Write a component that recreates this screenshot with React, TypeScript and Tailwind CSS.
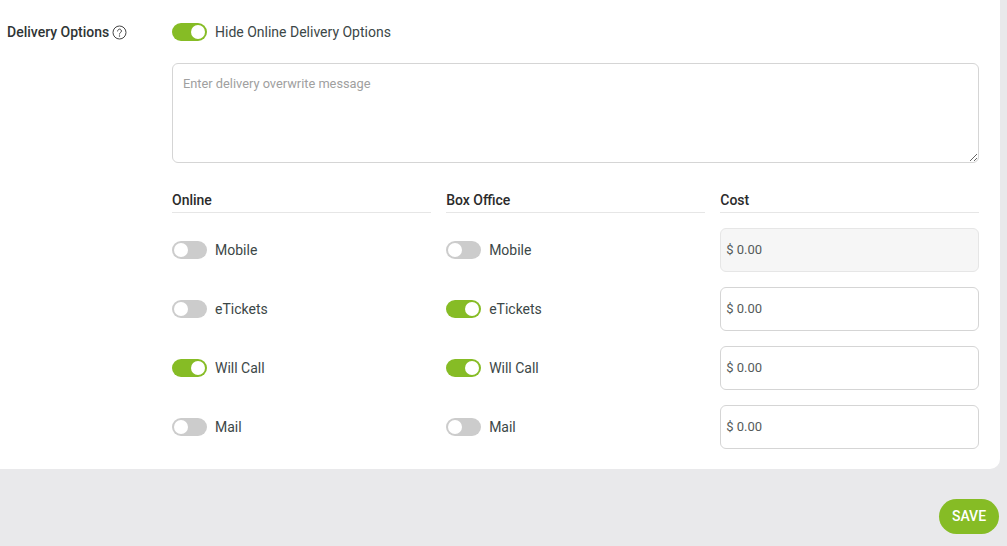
const F = "font-['Roboto',sans-serif]";

function Toggle({ on, label }: { on: boolean; label: string }) {
  return (
    <div className="flex items-center gap-2 h-[18px]">
      <span className={`flex h-[18px] w-[35px] items-center rounded-full px-[2px] ${on ? 'justify-end bg-[#86bc25]' : 'justify-start bg-[#cccccc]'}`}>
        <span className="h-[14px] w-[14px] rounded-full bg-white" />
      </span>
      <span className="text-[14px] leading-[18px] text-[#3c4747]">{label}</span>
    </div>
  );
}

function Head({ children }: { children: string }) {
  return (
    <div className="h-[26px] border-b border-[#e6e6e6] text-[14px] leading-[26px] font-medium text-[#2b2b2b]">
      {children}
    </div>
  );
}

function Cost({ disabled }: { disabled?: boolean }) {
  return (
    <div className={`flex h-[44px] items-center rounded-[6px] border px-[5px] text-[13px] text-[#555b5b] ${disabled ? 'border-[#e6e6e6] bg-[#f6f6f6]' : 'border-[#d5d5d5] bg-white'}`}>
      $ 0.00
    </div>
  );
}

const rows = [
  { name: 'Mobile', online: false, box: false, disabled: true },
  { name: 'eTickets', online: false, box: true, disabled: false },
  { name: 'Will Call', online: true, box: true, disabled: false },
  { name: 'Mail', online: false, box: false, disabled: false },
];

export default function App() {
  return (
    <div className={`${F} h-[546px] w-[1007px] overflow-hidden bg-[#e9e9eb]`}>
      <div className="flex h-[469px] w-[1000px] rounded-br-[10px] bg-white pl-[7px] pt-[23px]">
        <div className="flex h-[18px] w-[165px] shrink-0 items-center gap-[3px]">
          <span className="text-[14px] leading-[18px] font-medium text-[#2f3535]">Delivery Options</span>
          <svg width="15" height="15" viewBox="0 0 15 15" fill="none" className="text-[#444]">
            <circle cx="7.5" cy="7.5" r="6.5" stroke="currentColor" strokeWidth="1" />
            <path d="M5.6 6a1.9 1.9 0 1 1 2.9 1.6c-.6.4-1 .7-1 1.5" stroke="currentColor" strokeWidth="1" strokeLinecap="round" />
            <circle cx="7.5" cy="11" r="0.7" fill="currentColor" />
          </svg>
        </div>
        <div className="w-[807.4px]">
          <Toggle on label="Hide Online Delivery Options" />
          <textarea
            placeholder="Enter delivery overwrite message"
            className="mt-[22px] block h-[100px] w-full rounded-[6px] border border-[#d5d5d5] px-[10px] py-[10px] text-[12.8px] leading-[20px] text-[#3f4a4a] outline-none placeholder:text-[#a0a0a0]"
          />
          <div className="mt-[24px] grid grid-cols-3 gap-x-[15px]">
            <Head>Online</Head>
            <Head>Box Office</Head>
            <Head>Cost</Head>
          </div>
          <div className="mt-[15px] flex flex-col gap-[15px]">
            {rows.map((r) => (
              <div key={r.name} className="grid grid-cols-3 items-center gap-x-[15px]">
                <Toggle on={r.online} label={r.name} />
                <Toggle on={r.box} label={r.name} />
                <Cost disabled={r.disabled} />
              </div>
            ))}
          </div>
        </div>
      </div>
      <div className="flex justify-end pr-[8px] pt-[30px]">
        <button className="h-[35px] w-[60px] rounded-full bg-[#86bc25] text-[14px] font-medium text-white">SAVE</button>
      </div>
    </div>
  );
}
